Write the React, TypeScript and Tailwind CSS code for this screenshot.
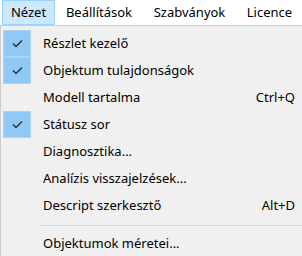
import React from "react";

type Item =
  | { kind: "item"; label: string; checked?: boolean; shortcut?: string }
  | { kind: "sep" };

const items: Item[] = [
  { kind: "item", label: "Részlet kezelő", checked: true },
  { kind: "item", label: "Objektum tulajdonságok", checked: true },
  { kind: "item", label: "Modell tartalma", shortcut: "Ctrl+Q" },
  { kind: "item", label: "Státusz sor", checked: true },
  { kind: "item", label: "Diagnosztika..." },
  { kind: "item", label: "Analízis visszajelzések..." },
  { kind: "item", label: "Descript szerkesztő", shortcut: "Alt+D" },
  { kind: "sep" },
  { kind: "item", label: "Objektumok méretei..." },
];

const Check = () => (
  <svg width="11" height="9" viewBox="0 0 11 9" fill="none">
    <path d="M1 4.5 L4 7.5 L10 1.5" stroke="#2b2b2b" strokeWidth="1.3" />
  </svg>
);

const App = () => {
  return (
    <div className="w-[302px] h-[256px] overflow-hidden bg-[#f0f0f0] text-black text-[13px] font-['Noto_Sans',sans-serif]">
      <div className="h-[25px] bg-white flex items-stretch pl-[2px] gap-[3px]">
        <div className="w-[53px] flex items-center justify-center bg-[#cce8ff] border border-[#99d1ff]">Nézet</div>
        <div className="w-[82px] flex items-center justify-center">Beállítások</div>
        <div className="w-[93px] flex items-center justify-center">Szabványok</div>
        <div className="w-[61px] flex items-center justify-center">Licence</div>
      </div>
      <div className="border-t border-l border-[#cccccc] pt-[4px] pl-[2px]">
        {items.map((it, i) =>
          it.kind === "sep" ? (
            <div key={i} className="pt-[6px] pb-[4px] pl-[36px]">
              <div className="h-px bg-[#d7d7d7]" />
            </div>
          ) : (
            <div key={i} className="h-[27px] flex items-center">
              <div className="w-[28px] h-full flex items-center justify-center">
                {it.checked && (
                  <div className="w-full h-full flex items-center justify-center bg-[#90c8f6] border border-[#a8d4f9]">
                    <Check />
                  </div>
                )}
              </div>
              <div className="flex-1 pl-[12px]">{it.label}</div>
              {it.shortcut && <div className="pr-[7px]">{it.shortcut}</div>}
            </div>
          )
        )}
      </div>
    </div>
  );
};

export default App;
